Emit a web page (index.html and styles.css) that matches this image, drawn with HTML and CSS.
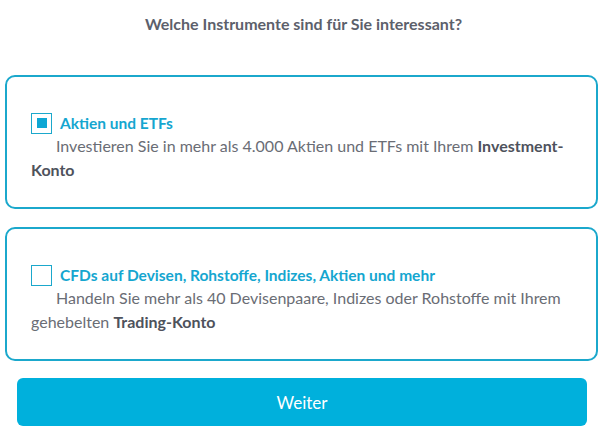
FILE: index.html
```html
<!DOCTYPE html>
<html lang="de">
  <head>
    <meta charset="UTF-8" />
    <meta name="viewport" content="width=device-width, initial-scale=1.0" />
    <title>Instrumente</title>
    <link rel="stylesheet" href="styles.css">
  </head>
  <body>
    <h1 class="question">Welche Instrumente sind für Sie interessant?</h1>

    <div class="options">
      <label class="option">
        <div class="option-head">
          <span class="check checked"></span>
          <span class="option-title">Aktien und ETFs</span>
        </div>
        <p class="option-text">
          Investieren Sie in mehr als 4.000 Aktien und ETFs mit Ihrem <strong>Investment-Konto</strong>
        </p>
      </label>

      <label class="option">
        <div class="option-head">
          <span class="check"></span>
          <span class="option-title">CFDs auf Devisen, Rohstoffe, Indizes, Aktien und mehr</span>
        </div>
        <p class="option-text">
          Handeln Sie mehr als 40 Devisenpaare, Indizes oder Rohstoffe mit Ihrem gehebelten <strong>Trading-Konto</strong>
        </p>
      </label>
    </div>

    <button class="next-btn">Weiter</button>
  </body>
</html>
```

FILE: styles.css
```css
body {
  margin: 0;
  background: #fff;
  font-family: "Lato", "Open Sans", sans-serif;
  color: #6a6d75;
}

.question {
  margin: 0;
  padding-top: 14px;
  height: 60px;
  box-sizing: border-box;
  text-align: center;
  font-size: 16px;
  font-weight: 700;
  color: #5c606b;
}

.options {
  display: flex;
  flex-direction: column;
  gap: 18px;
  padding: 15px 9px 0 5px;
}

.option {
  display: block;
  height: 134px;
  box-sizing: border-box;
  border: 2px solid #1ba8cc;
  border-radius: 10px;
  padding: 35px 22px 0 24px;
  cursor: pointer;
}

.option-head {
  display: flex;
  align-items: center;
  gap: 8px;
  height: 22px;
}

.check {
  width: 19px;
  height: 19px;
  border: 1px solid #1ba8cc;
  display: flex;
  align-items: center;
  justify-content: center;
  flex-shrink: 0;
}

.check.checked::after {
  content: "";
  width: 10px;
  height: 10px;
  background: #0ea7d4;
}

.option-title {
  font-size: 15.5px;
  font-weight: 700;
  color: #15a6d0;
}

.option-text {
  margin: 0;
  font-size: 16px;
  line-height: 24px;
  text-indent: 25px;
}

.option-text strong {
  color: #4e525c;
}

.next-btn {
  display: block;
  margin: 17px 20px 0 17px;
  width: 570px;
  height: 48px;
  border: none;
  border-radius: 6px;
  background: #00b0dc;
  color: #fff;
  font-family: inherit;
  font-size: 17px;
  cursor: pointer;
}
```
